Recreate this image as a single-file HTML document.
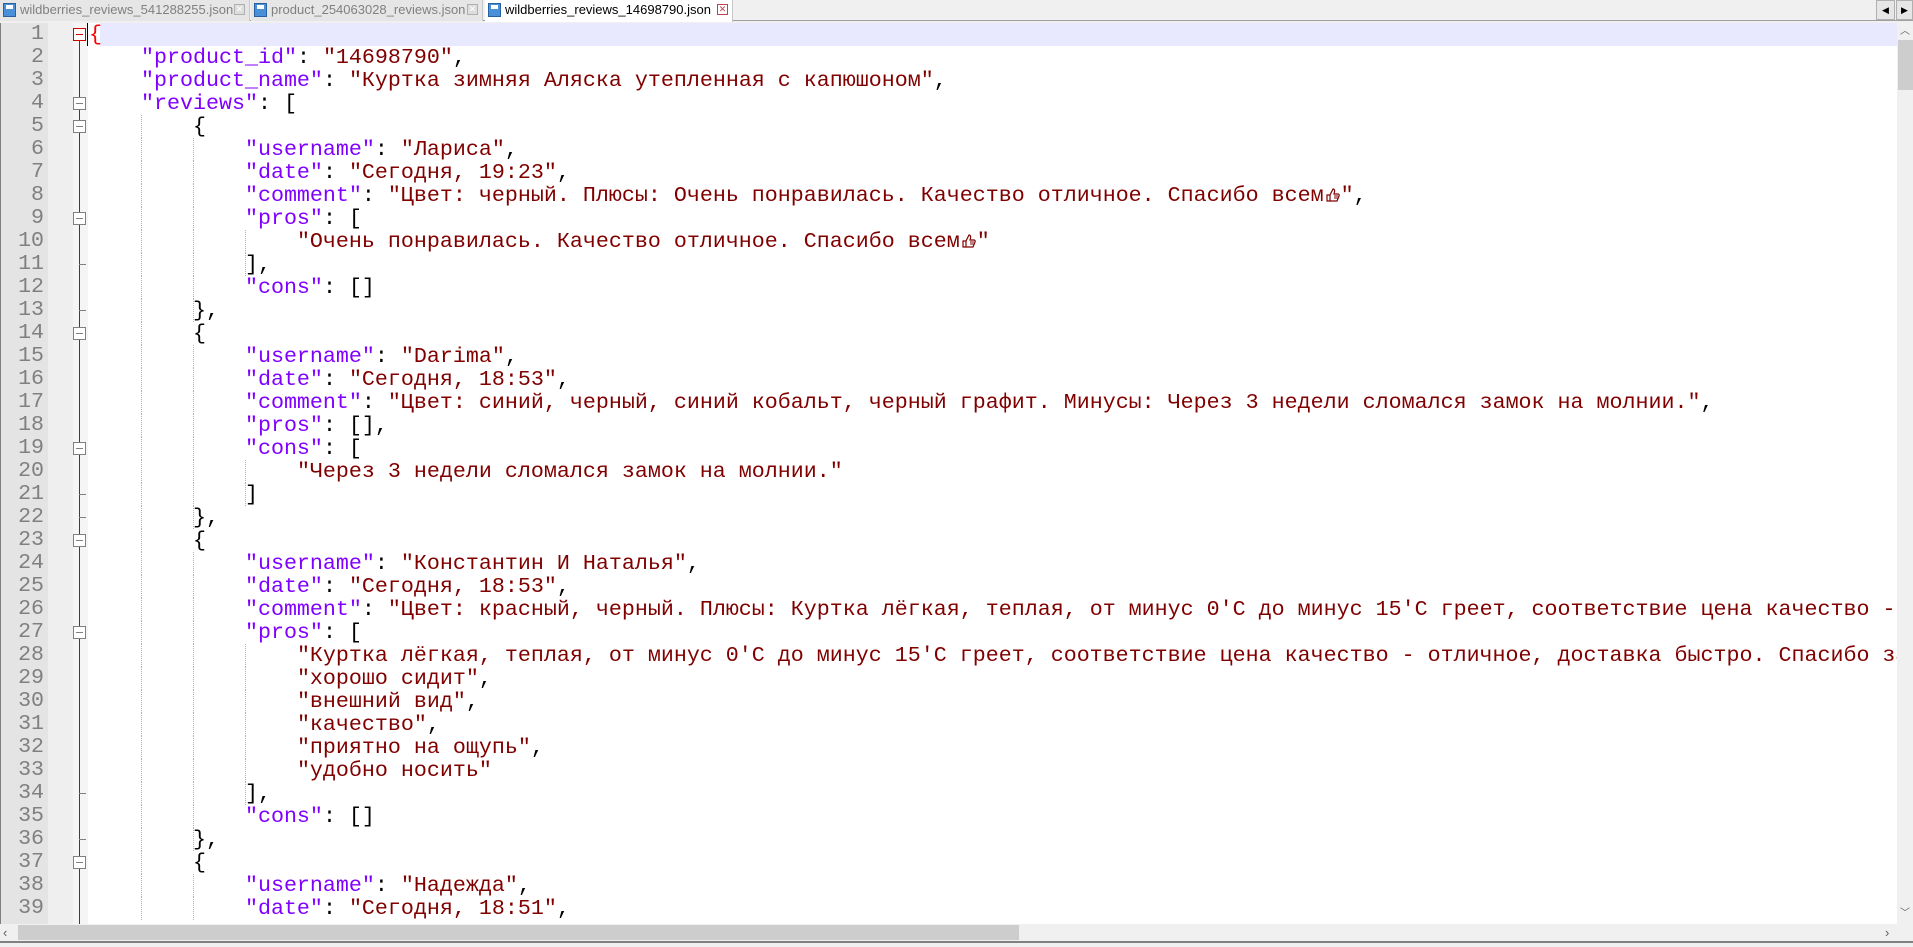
<!DOCTYPE html>
<html><head><meta charset="utf-8">
<style>
*{margin:0;padding:0;box-sizing:border-box}
body{width:1913px;height:947px;overflow:hidden;background:#f0f0f0;font-family:"Liberation Sans",sans-serif;position:relative}
#tabs{position:absolute;left:0;top:0;width:1913px;height:21px;background:#f0f0f0;border-bottom:1px solid #a0a0a0}
.tab{position:absolute;top:0;height:21px;font-size:13px;color:#808080;line-height:20px;padding-left:20px;border-right:1px solid #c8c8c8;background:#e6e6e6}
.tab.act{background:#fff;color:#000;height:22px}
.tab .ic{position:absolute;left:3px;top:3px;width:13px;height:14px;background:#4a90d9;border:1px solid #2a5fa0}
.tab .ic:after{content:"";position:absolute;left:2px;top:1px;width:7px;height:4px;background:#fff}
.tab .x{position:absolute;right:4px;top:4px;width:11px;height:11px;border:1px solid #b0b0b0;background:#ddd;font-size:9px;line-height:9px;text-align:center;color:#fff}
.tab.act .x{background:#fff;border-color:#c04050;color:#c04050}
#ed{position:absolute;left:0;top:23px;width:1897px;height:901px;background:#fff;overflow:hidden}
#gut{position:absolute;left:0;top:0;width:48px;height:901px;background:#e4e4e4;border-left:1px solid #808080}
#gut2{position:absolute;left:48px;top:0;width:25px;height:901px;background:#efefef}
#fold{position:absolute;left:73px;top:0;width:15px;height:901px;background:#f5f5f5}
.ln{position:absolute;left:0;width:44px;text-align:right;font-family:"Liberation Mono",monospace;font-size:21.6px;color:#808080;height:23px;line-height:23px}
.row{position:absolute;left:89px;height:23px;line-height:23px;white-space:pre;font-family:"Liberation Mono",monospace;font-size:21.667px;color:#000}
.k{color:#8000ff}.s{color:#800000}
.g{position:absolute;width:0;border-left:1px dotted #b0b0b0;height:23px}
.fb{position:absolute;left:73px;width:13px;height:13px;border:1px solid #808080;background:#fff}
.fb:after{content:"";position:absolute;left:2px;top:5px;width:7px;height:1px;background:#808080}
.fb.r{border-color:#d00000}
.fb.r:after{background:#d00000}
.ft{position:absolute;left:79px;width:7px;height:1px;background:#808080}
#vs{position:absolute;left:1897px;top:23px;width:16px;height:901px;background:#f0f0f0}
#hs{position:absolute;left:0;top:924px;width:1897px;height:17px;background:#f0f0f0}
</style></head><body>
<div id="tabs">
<div class="tab" style="left:0;width:250px"><span class="ic"></span>wildberries_reviews_541288255.json<span class="x">✕</span></div>
<div class="tab" style="left:251px;width:232px"><span class="ic"></span>product_254063028_reviews.json<span class="x">✕</span></div>
<div class="tab act" style="left:485px;width:248px"><span class="ic"></span>wildberries_reviews_14698790.json<span class="x">✕</span></div>
<div style="position:absolute;left:1876px;top:0;width:19px;height:20px;border:1px solid #b0b0b0;background:#e6e6e6;font-size:9px;text-align:center;line-height:18px">◀</div>
<div style="position:absolute;left:1896px;top:0;width:17px;height:20px;border:1px solid #b0b0b0;background:#e6e6e6;font-size:9px;text-align:center;line-height:18px">▶</div>
</div>
<div id="ed">
<div id="gut"></div><div id="gut2"></div><div id="fold"></div>
<div style="position:absolute;left:100px;top:0;width:1797px;height:23px;background:#e8e8ff"></div>
<div style="position:absolute;left:79px;top:12px;width:1px;height:900px;background:#d00000"></div>
<div style="position:absolute;left:87px;top:0;width:1px;height:23px;background:#000"></div>
<div id="c"></div>
</div>
<div id="vs">
<div style="position:absolute;left:0;top:0;width:16px;height:17px;text-align:center;font-size:10px;color:#606060;line-height:17px">︿</div>
<div style="position:absolute;left:1px;top:17px;width:15px;height:50px;background:#cdcdcd"></div>
<div style="position:absolute;left:0;top:882px;width:16px;height:17px;text-align:center;font-size:10px;color:#606060;line-height:17px">﹀</div>
</div>
<div id="hs">
<div style="position:absolute;left:3px;top:0;font-size:13px;color:#606060;line-height:17px">‹</div>
<div style="position:absolute;left:18px;top:1px;width:1001px;height:15px;background:#cdcdcd"></div>
<div style="position:absolute;left:1885px;top:0;font-size:13px;color:#606060;line-height:17px">›</div>
</div>
<div style="position:absolute;left:0;top:941px;width:1913px;height:2px;background:#808080"></div>
<div style="position:absolute;left:0;top:943px;width:1913px;height:4px;background:#f0f0f0"></div>
<script>
var T='<svg width="15" height="16" viewBox="0 0 15 16" style="vertical-align:-2px;margin:0 1px"><path d="M2 8h3v6H2zM5 8l3-6c1 0 2 1 1.5 3L9 7h4c1 0 1.5 1 1 2l-2 5H5" fill="none" stroke="#800000" stroke-width="1.2"/><path d="M9 9h4M9 11h3.5" stroke="#800000"/></svg>';
var L=[
'{',
'    "product_id": "14698790",',
'    "product_name": "Куртка зимняя Аляска утепленная с капюшоном",',
'    "reviews": [',
'        {',
'            "username": "Лариса",',
'            "date": "Сегодня, 19:23",',
'            "comment": "Цвет: черный. Плюсы: Очень понравилась. Качество отличное. Спасибо всем@",',
'            "pros": [',
'                "Очень понравилась. Качество отличное. Спасибо всем@"',
'            ],',
'            "cons": []',
'        },',
'        {',
'            "username": "Darima",',
'            "date": "Сегодня, 18:53",',
'            "comment": "Цвет: синий, черный, синий кобальт, черный графит. Минусы: Через 3 недели сломался замок на молнии.",',
'            "pros": [],',
'            "cons": [',
'                "Через 3 недели сломался замок на молнии."',
'            ]',
'        },',
'        {',
'            "username": "Константин И Наталья",',
'            "date": "Сегодня, 18:53",',
'            "comment": "Цвет: красный, черный. Плюсы: Куртка лёгкая, теплая, от минус 0\'C до минус 15\'C греет, соответствие цена качество - отличное, доставка быстро.",',
'            "pros": [',
'                "Куртка лёгкая, теплая, от минус 0\'C до минус 15\'C греет, соответствие цена качество - отличное, доставка быстро. Спасибо за куртку",',
'                "хорошо сидит",',
'                "внешний вид",',
'                "качество",',
'                "приятно на ощупь",',
'                "удобно носить"',
'            ],',
'            "cons": []',
'        },',
'        {',
'            "username": "Надежда",',
'            "date": "Сегодня, 18:51",'
];
var boxes=[1,4,5,9,14,19,23,27,37],ticks=[11,13,21,22,34,36];
function esc(s){return s.replace(/&/g,'&amp;').replace(/</g,'&lt;');}
var h='';
L.forEach(function(l,i){
 var y=i*23,n=i+1;
 h+='<div class="ln" style="top:'+y+'px">'+n+'</div>';
 var ind=l.match(/^ */)[0].length;
 var t=l.replace(/^ */,'');
 var lvl=ind;
 if(/^[\]\}]/.test(t))lvl=ind+4;
 for(var c=4;c<lvl;c+=4)h+='<div class="g" style="left:'+(89+c*13)+'px;top:'+y+'px"></div>';
 if(boxes.indexOf(n)>=0)h+='<div class="fb'+(n==1?' r':'')+'" style="top:'+(y+5)+'px"></div>';
 if(ticks.indexOf(n)>=0)h+='<div class="ft" style="top:'+(y+11)+'px"></div>';
 var o;
 if(n==1)o='<span style="color:#f00">{</span>';
 else{
  o=esc(l).replace(/"([^"]*)"(\s*:)?/g,function(m,a,b){return b?'<span class="k">"'+a+'"</span>'+b:'<span class="s">"'+a+'"</span>';});
  o=o.replace(/@/g,T);
 }
 h+='<div class="row" style="top:'+y+'px">'+o+'</div>';
});
document.getElementById('c').innerHTML=h;
</script>
</body></html>
